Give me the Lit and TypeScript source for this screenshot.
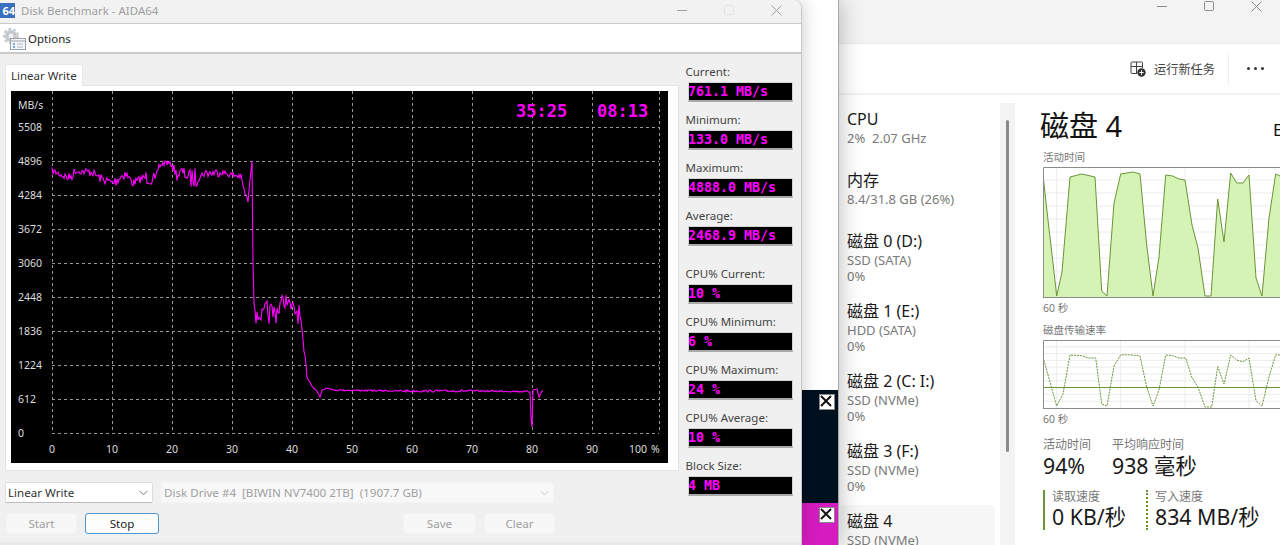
import { LitElement, html, css, svg } from "lit";
import { customElement } from "lit/decorators.js";

// seeded noise so the benchmark trace stays the same on every load
let seed = 7;
const rnd = () => {
    seed = (seed * 16807) % 2147483647;
    return seed / 2147483647 - 0.5;
};

type Anchor = [number, number, number];

// x, y, noise amplitude
const TRACE: Anchor[] = [
    [52, 171, 5], [60, 174, 6], [69, 178, 7], [76, 171, 4], [86, 172, 6], [92, 172, 5],
    [100, 178, 6], [113, 183, 8], [125, 173, 6], [133, 183, 5], [145, 177, 9], [155, 180, 3],
    [159, 166, 4], [166, 162, 3], [172, 165, 6], [177, 175, 8], [182, 172, 8], [190, 178, 14],
    [198, 178, 5], [204, 173, 6], [212, 173, 6], [220, 172, 4], [232, 175, 5], [241, 176, 3],
    [244, 190, 4], [248, 202, 1], [250, 180, 0], [252, 161, 0], [253, 262, 0], [254, 303, 0],
    [256, 318, 8], [265, 313, 16], [275, 313, 16], [282, 302, 10], [287, 300, 8], [292, 310, 12],
    [298, 312, 16], [301, 322, 6], [303, 345, 7], [305, 360, 8], [307, 376, 3], [310, 382, 2],
    [314, 388, 2], [318, 393, 3], [320, 397, 1], [322, 390, 1], [326, 388, 0], [335, 390, 1],
    [400, 391, 1.5], [472, 391, 1], [480, 391, 1], [528, 391.5, 1], [530, 392, 0], [531, 418, 0],
    [532, 427, 0], [533, 390, 0], [537, 389, 0], [539, 397, 0], [542, 391, 0], [544, 391, 0],
];

const tracePoints = () => {
    const out: string[] = [];
    for (let i = 0; i < TRACE.length - 1; i++) {
        const [x0, y0, a0] = TRACE[i];
        const [x1, y1] = TRACE[i + 1];
        const steps = Math.max(1, Math.round(x1 - x0));
        for (let s = 0; s < steps; s++) {
            const t = s / steps;
            const y = y0 + (y1 - y0) * t + rnd() * a0 * 1.5;
            out.push(`${(x0 + (x1 - x0) * t - 11).toFixed(1)},${(y - 91).toFixed(1)}`);
        }
    }
    return out.join(" ");
};

const TRACE_POINTS = tracePoints();

const ACTIVE = [
    [0, 8], [5, 53], [10, 96], [13.7, 129], [19, 105], [27, 10], [38.7, 7], [52, 10], [58.7, 124],
    [64, 129], [71, 36], [77.7, 7], [90, 5], [97, 7], [103.7, 78], [110, 129], [116, 90], [122.7, 8],
    [129.7, 9], [136, 12], [142, 13], [149, 58], [155, 81], [162, 129], [168, 129], [174.7, 32],
    [181, 75], [187.7, 6], [193.7, 16], [200, 16], [206, 8], [213, 111], [219, 129], [226, 51],
    [232.7, 7], [237, 9],
];

const RATE = [
    [0, 17], [13.7, 66], [20, 54], [27, 15], [38.7, 15.7], [45, 18], [52.7, 18], [58.7, 64], [64, 66],
    [71, 26], [77.7, 14.7], [90, 15], [97, 16], [103.7, 47], [110, 66], [116, 50], [122.7, 15],
    [129.7, 15.7], [136, 18], [142.7, 18], [148.7, 37], [155, 47], [162, 67], [168.7, 67], [174.7, 26.7],
    [181, 44], [187.7, 15], [193.7, 20], [200, 21.7], [206, 18], [213, 60.7], [219, 66], [226, 37],
    [232.7, 14.7], [237, 15],
];

const pts = (list: number[][]) => list.map((p) => p.join(",")).join(" ");

const Y_AXIS = ["5508", "4896", "4284", "3672", "3060", "2448", "1836", "1224", "612", "0"];
const X_AXIS = [0, 10, 20, 30, 40, 50, 60, 70, 80, 90];

const READOUTS = [
    ["Current:", "761.1 MB/s"],
    ["Minimum:", "133.0 MB/s"],
    ["Maximum:", "4888.0 MB/s"],
    ["Average:", "2468.9 MB/s"],
    ["CPU% Current:", "10 %"],
    ["CPU% Minimum:", "6 %"],
    ["CPU% Maximum:", "24 %"],
    ["CPU% Average:", "10 %"],
    ["Block Size:", "4 MB"],
];

const DEVICES = [
    { name: "CPU", lines: ["2%\u00a0 2.07 GHz"] },
    { name: "内存", lines: ["8.4/31.8 GB (26%)"] },
    { name: "磁盘 0 (D:)", lines: ["SSD (SATA)", "0%"] },
    { name: "磁盘 1 (E:)", lines: ["HDD (SATA)", "0%"] },
    { name: "磁盘 2 (C: I:)", lines: ["SSD (NVMe)", "0%"] },
    { name: "磁盘 3 (F:)", lines: ["SSD (NVMe)", "0%"] },
    { name: "磁盘 4", lines: ["SSD (NVMe)"], selected: true },
];

const chevron = html`<svg class="chev" width="9" height="6" viewBox="0 0 9 6"><path d="M.5 .8 4.5 4.8 8.5 .8" fill="none" stroke="currentColor"/></svg>`;

const winButtons = (color: string, maxColor = color) => html`
    <svg class="glyph" width="11" height="11" viewBox="0 0 11 11"><path d="M0 5.5H10" stroke=${color}/></svg>
    <svg class="glyph" width="11" height="11" viewBox="0 0 11 11"><rect x=".5" y=".5" width="9" height="9" rx="1" fill="none" stroke=${maxColor}/></svg>
    <svg class="glyph" width="11" height="11" viewBox="0 0 11 11"><path d="M.5 .5 10.5 10.5M10.5 .5 .5 10.5" stroke=${color}/></svg>
`;

@customElement("app-root")
export class AppRoot extends LitElement {
    static styles = css`
        :host {
            display: block;
            position: relative;
            width: 1280px;
            height: 545px;
            overflow: hidden;
            background: #fff;
            font-family: "Noto Sans", "Noto Sans CJK SC", sans-serif;
            color: #222;
        }

        .window {
            position: absolute;
            top: 0;
            bottom: 0;
        }

        /* task manager, bottom of the stack */
        .taskmgr {
            left: 838px;
            right: 0;
            display: flex;
            flex-direction: column;
            background: #fff;
        }

        .tm-title {
            height: 42px;
            background: #f3f3f3;
            flex: none;
            border-bottom: 1px solid #e8e8e8;
            display: flex;
            justify-content: flex-end;
            align-items: flex-start;
            gap: 36px;
            padding: 1px 18px 0 0;
        }

        .tm-toolbar {
            height: 49px;
            flex: none;
            border-bottom: 2px solid #f2f2f2;
            display: flex;
            align-items: center;
            justify-content: flex-end;
            padding-right: 16px;
            font-size: 12.2px;
            color: #444;
        }

        .run-task {
            display: flex;
            align-items: center;
            gap: 8px;
            padding-right: 13px;
            margin-right: 18px;
            border-right: 1px solid #f0f0f0;
            height: 32px;
        }

        .more {
            display: flex;
            gap: 4px;
        }

        .more i {
            width: 3px;
            height: 3px;
            border-radius: 50%;
            background: #333;
        }

        .tm-body {
            flex: 1;
            display: flex;
            min-height: 0;
        }

        .devices {
            width: 162px;
            flex: none;
            padding: 13px 0 0 2px;
            box-sizing: border-box;
        }

        .device {
            padding: 0 0 23px 7px;
            margin-right: 5px;
            font-size: 13px;
            line-height: 16px;
            color: #7a7a7a;
        }

        .device.two {
            padding-bottom: 16px;
        }

        .device.selected {
            background: #f7f7f7;
            border-radius: 4px;
            padding-top: 5px;
            margin-top: -5px;
        }

        .device .name {
            font-size: 16px;
            line-height: 22px;
            color: #1a1a1a;
        }

        .scroll {
            width: 15px;
            flex: none;
            margin-top: 8px;
            background: #f3f3f3;
            display: flex;
            justify-content: center;
            padding-top: 17px;
            box-sizing: border-box;
        }

        .scroll i {
            width: 3px;
            height: 332px;
            border-radius: 2px;
            background: #8a8a8a;
        }

        .detail {
            flex: 1;
            min-width: 0;
            padding: 11px 0 0 28px;
            overflow: hidden;
        }

        .detail-head {
            display: flex;
            justify-content: space-between;
            width: 243px;
            margin-left: -3px;
            height: 40px;
            font-size: 29px;
            line-height: 40px;
            color: #111;
        }

        .detail-head b {
            font-size: 17px;
            font-weight: 400;
            line-height: 48px;
            width: 10px;
            overflow: hidden;
        }

        .cap {
            font-size: 10.5px;
            line-height: 14px;
            color: #777;
        }

        .cap.first {
            margin-top: 4px;
        }

        .cap.after {
            margin-top: 3px;
        }

        .cap.rate {
            margin-top: 8px;
        }

        .detail svg {
            display: block;
            margin-top: 3px;
        }

        .stats {
            display: flex;
            margin-top: 11px;
        }

        .stats > div:first-child {
            width: 69px;
        }

        .big {
            font-size: 21.3px;
            line-height: 26px;
            color: #1a1a1a;
            white-space: nowrap;
        }

        .cap.s {
            font-size: 12px;
            line-height: 16px;
            color: #777;
        }

        .speeds {
            display: flex;
            margin-top: 11px;
        }

        .speed {
            height: 40px;
            padding-left: 7px;
            border-left: 2px solid #6a9436;
            width: 94px;
        }

        .speed.dotted {
            border-left-style: dotted;
        }

        .speed .cap.s {
            line-height: 14px;
        }

        /* window in between: only its right edge is visible */
        .middle {
            left: 0;
            width: 838px;
            display: flex;
            flex-direction: column;
            justify-content: flex-end;
            align-items: flex-end;
            background: #fff;
            border-right: 1px solid #a8a8a8;
            box-shadow: 0 0 22px rgba(0, 0, 0, 0.28);
        }

        .tile {
            width: 36px;
            display: flex;
            justify-content: flex-end;
            box-sizing: border-box;
            padding: 4px 3px 0 0;
        }

        .tile.navy {
            height: 113px;
            background: #00101f;
        }

        .tile.pink {
            height: 42px;
            background: #d61cc0;
        }

        .tile span {
            width: 14px;
            height: 14px;
            background: #fff;
            border: 1px solid #888;
            display: flex;
        }

        /* benchmark window */
        .aida {
            left: 0;
            width: 802px;
            background: #f0f0f0;
            border-right: 1px solid #c8c8c8;
            border-top-right-radius: 8px;
            display: flex;
            flex-direction: column;
            box-shadow: 0 0 18px rgba(0, 0, 0, 0.22);
            box-sizing: border-box;
        }

        .a-title {
            height: 20px;
            flex: none;
            display: flex;
            align-items: center;
            font-size: 11.5px;
            color: #a0a0a0;
            border-bottom: 1px solid #c9c9c9;
            padding: 0 19px 3px 0;
            background: #f2f2f2;
            border-top-right-radius: 8px;
        }

        .logo {
            width: 15px;
            height: 15px;
            margin-right: 6px;
            background: #3a6fc0;
            color: #fff;
            font-size: 11px;
            font-weight: 700;
            line-height: 15px;
            text-align: right;
            overflow: hidden;
        }

        .a-title .caption {
            flex: 1;
        }

        .a-title .btns {
            display: flex;
            gap: 36px;
        }

        .a-tools {
            height: 28px;
            flex: none;
            background: #fff;
            border-bottom: 2px solid #c9c9c9;
            display: flex;
            align-items: center;
            gap: 2px;
            padding-left: 2px;
            font-size: 11.5px;
            color: #222;
        }

        .a-main {
            flex: 1;
            display: grid;
            grid-template-columns: 674px 1fr;
            padding: 10px 0 0 5px;
            min-height: 0;
        }

        .tab {
            display: inline-block;
            height: 22px;
            line-height: 21px;
            padding: 0 5px;
            background: #fff;
            border: 1px solid #e8e8e8;
            border-bottom: 0;
            box-sizing: border-box;
            font-size: 11.5px;
            color: #333;
            vertical-align: top;
        }

        .panel {
            background: #fff;
            border: 1px solid #e4e4e4;
            height: 386px;
            box-sizing: border-box;
            padding: 5px 0 0 5px;
            margin-top: -1px;
        }

        .panel svg {
            display: block;
        }

        .readouts {
            display: flex;
            flex-direction: column;
            padding: 0 0 0 6.5px;
        }

        .readouts label {
            display: block;
            font-size: 11.5px;
            line-height: 16px;
            height: 16px;
            color: #444;
            white-space: nowrap;
        }

        .readout + .readout {
            margin-top: 10px;
        }

        .readout.group {
            margin-top: 20px;
        }

        .value {
            width: 105px;
            height: 20px;
            margin: 2px 0 0 2.5px;
            background: #000;
            border: 1px solid #d4d4d4;
            border-bottom: 2px solid #aaa;
            box-sizing: border-box;
            color: #f0f;
            font-family: "DejaVu Sans Mono", monospace;
            font-weight: 700;
            font-size: 13.3px;
            line-height: 17px;
            text-indent: -1px;
            white-space: nowrap;
            overflow: hidden;
        }

        .a-foot {
            flex: none;
            height: 71px;
            padding: 8px 0 0 5px;
            box-sizing: border-box;
            border-bottom: 3px solid #e8e8e8;
            font-size: 11.6px;
        }

        .combos {
            display: flex;
            gap: 8px;
            width: 549px;
        }

        .combo {
            height: 21px;
            box-sizing: border-box;
            padding: 0 4px 0 2px;
            display: flex;
            align-items: center;
            justify-content: space-between;
            background: #fff;
            border: 1px solid #ddd;
            border-bottom-color: #bbb;
            border-radius: 2px;
            color: #333;
        }

        .combo.first {
            width: 148px;
        }

        .combo.off {
            flex: 1;
            background: #f8f8f8;
            border-color: #f4f4f4;
            color: #a0a0a0;
            white-space: pre;
        }

        .chev {
            color: #777;
            flex: none;
        }

        .combo.off .chev {
            color: #ccc;
        }

        .buttons {
            display: grid;
            grid-template-columns: 71px 74px 1fr 73px 71px;
            column-gap: 8px;
            width: 549px;
            margin: 10px 0 0 1px;
        }

        .btn {
            height: 21px;
            line-height: 19px;
            text-align: center;
            box-sizing: border-box;
            background: #f7f7f7;
            border: 1px solid #f3f3f3;
            border-radius: 3px;
            color: #a0a0a0;
        }

        .btn.on {
            background: #fdfdfd;
            border: 1px solid #4c95cf;
            color: #222;
        }
    `;

    private chart() {
        const rows = Y_AXIS.map((_, i) => 36.5 + i * 34);
        const cols = [...X_AXIS.map((v) => 41.5 + v * 6), 648.5];
        return html`
            <svg width="657" height="372" viewBox="0 0 657 372" font-family="Noto Sans, sans-serif" font-size="10.5">
                <rect width="657" height="372" fill="#000"/>
                ${rows.map((y) => svg`<path d="M41 ${y}H648" stroke="#9a9a9a" stroke-dasharray="3 3" shape-rendering="crispEdges"/>`)}
                ${cols.map((x) => svg`<path d="M${x} 0V342" stroke="#9a9a9a" stroke-dasharray="3 3" shape-rendering="crispEdges"/>`)}
                <polyline points=${TRACE_POINTS} fill="none" stroke="#ff00ff" stroke-width="1.1"/>
                <text x="7" y="18" fill="#ddd">MB/s</text>
                ${Y_AXIS.map((t, i) => svg`<text x="7" y=${40 + i * 34} fill="#ddd">${t}</text>`)}
                ${X_AXIS.map((v) => svg`<text x=${41 + v * 6} y="362" text-anchor="middle" fill="#ddd">${v}</text>`)}
                <text x="618" y="362" fill="#ddd">100</text>
                <text x="640" y="362" fill="#ddd">%</text>
                <text x="505" y="26" fill="#f0f" font-family="DejaVu Sans Mono, monospace" font-weight="700" font-size="17">35:25</text>
                <text x="586" y="26" fill="#f0f" font-family="DejaVu Sans Mono, monospace" font-weight="700" font-size="17">08:13</text>
            </svg>
        `;
    }

    private miniGrid(w: number, h: number, rowCount: number) {
        const step = h / rowCount;
        const rows = Array.from({ length: rowCount - 1 }, (_, i) => (i + 1) * step);
        return svg`
            ${rows.map((y) => svg`<path d="M0 ${y}H${w}" stroke="#ececec"/>`)}
            ${[13.7, 77.7, 142, 206].map((x) => svg`<path d="M${x} 0V${h}" stroke="#ececec"/>`)}
        `;
    }

    private activityChart() {
        return html`
            <svg width="240" height="131" viewBox="0 0 240 131">
                <rect x=".5" y=".5" width="240" height="130" fill="#fff"/>
                ${this.miniGrid(240, 130, 10)}
                <polygon points="0,130 ${pts(ACTIVE)} 237,130" fill="#d6f3b6"/>
                <polyline points=${pts(ACTIVE)} fill="none" stroke="#6a9436" stroke-width="1"/>
                <path d="M.5 130V.5H240M0 130.5H240" fill="none" stroke="#8c8c8c"/>
            </svg>
        `;
    }

    private rateChart() {
        return html`
            <svg width="240" height="69" viewBox="0 0 240 69">
                ${this.miniGrid(240, 68, 10)}
                <polyline points=${pts(RATE)} fill="none" stroke="#6a9436" stroke-width="1" stroke-dasharray="2 1"/>
                <path d="M0 47.5H240" stroke="#6a9436"/>
                <path d="M.5 68V.5H240M0 68.5H240" fill="none" stroke="#8c8c8c"/>
            </svg>
        `;
    }

    render() {
        return html`
            <div class="window taskmgr">
                <div class="tm-title">${winButtons("#8c8c8c")}</div>
                <div class="tm-toolbar">
                    <div class="run-task">
                        <svg width="16" height="16" viewBox="0 0 16 16">
                            <path d="M7 12.5H2a1 1 0 0 1-1-1V2a1 1 0 0 1 1-1h9.500a1 1 0 0 1 1 1v5M1 5.500h11.500M6.500 1v11" fill="none" stroke="#444"/>
                            <circle cx="11.500" cy="11.500" r="4.200" fill="#333"/>
                            <path d="M9.300 11.500h4.400M11.500 9.300v4.400" stroke="#fff"/>
                        </svg>
                        <span>运行新任务</span>
                    </div>
                    <div class="more"><i></i><i></i><i></i></div>
                </div>
                <div class="tm-body">
                    <div class="devices">
                        ${DEVICES.map((d) => html`
                            <div class="device ${d.lines.length === 2 ? "two" : ""} ${d.selected ? "selected" : ""}">
                                <div class="name">${d.name}</div>
                                ${d.lines.map((l) => html`<div>${l}</div>`)}
                            </div>
                        `)}
                    </div>
                    <div class="scroll"><i></i></div>
                    <div class="detail">
                        <div class="detail-head"><span>磁盘 4</span><b>E</b></div>
                        <div class="cap first">活动时间</div>
                        ${this.activityChart()}
                        <div class="cap after">60 秒</div>
                        <div class="cap rate">磁盘传输速率</div>
                        ${this.rateChart()}
                        <div class="cap after">60 秒</div>
                        <div class="stats">
                            <div><div class="cap s">活动时间</div><div class="big">94%</div></div>
                            <div><div class="cap s">平均响应时间</div><div class="big">938 毫秒</div></div>
                        </div>
                        <div class="speeds">
                            <div class="speed"><div class="cap s">读取速度</div><div class="big">0 KB/秒</div></div>
                            <div class="speed dotted"><div class="cap s">写入速度</div><div class="big">834 MB/秒</div></div>
                        </div>
                    </div>
                </div>
            </div>

            <div class="window middle">
                <div class="tile navy"><span><svg width="12" height="12" viewBox="0 0 12 12"><path d="M1 1 11 11M11 1 1 11" stroke="#111" stroke-width="2"/></svg></span></div>
                <div class="tile pink"><span><svg width="12" height="12" viewBox="0 0 12 12"><path d="M1 1 11 11M11 1 1 11" stroke="#111" stroke-width="2"/></svg></span></div>
            </div>

            <div class="window aida">
                <div class="a-title">
                    <div class="logo">64</div>
                    <div class="caption">Disk Benchmark - AIDA64</div>
                    <div class="btns">${winButtons("#a0a0a0", "#e2e2e2")}</div>
                </div>
                <div class="a-tools">
                    <svg width="24" height="25" viewBox="0 0 24 25">
                        <circle cx="9" cy="10" r="7" fill="none" stroke="#c4c8cc" stroke-width="2" stroke-dasharray="3 2"/>
                        <circle cx="9" cy="10" r="6" fill="#c4c8cc"/>
                        <circle cx="9" cy="10" r="2.500" fill="#eef0f2"/>
                        <rect x="8.500" y="12.500" width="15" height="11" fill="#f6f7f8" stroke="#9aa2aa"/>
                        <path d="M9 15h14" stroke="#c6ccd2" stroke-width="2"/>
                        <path d="M11 18h2M11 21h2" stroke="#4a90d8" stroke-width="1.500"/>
                        <path d="M15 18h6M15 21h6" stroke="#b0b6bc"/>
                    </svg>
                    <span>Options</span>
                </div>
                <div class="a-main">
                    <div>
                        <div class="tab">Linear Write</div>
                        <div class="panel">${this.chart()}</div>
                    </div>
                    <div class="readouts">
                        ${READOUTS.map(([label, value], i) => html`
                            <div class="readout ${i === 4 ? "group" : ""}"><label>${label}</label><div class="value">${value}</div></div>
                        `)}
                    </div>
                </div>
                <div class="a-foot">
                    <div class="combos">
                        <div class="combo first"><span>Linear Write</span>${chevron}</div>
                        <div class="combo off"><span>Disk Drive #4  [BIWIN NV7400 2TB]  (1907.7 GB)</span>${chevron}</div>
                    </div>
                    <div class="buttons">
                        <div class="btn">Start</div>
                        <div class="btn on">Stop</div>
                        <div></div>
                        <div class="btn">Save</div>
                        <div class="btn">Clear</div>
                    </div>
                </div>
            </div>
        `;
    }
}
